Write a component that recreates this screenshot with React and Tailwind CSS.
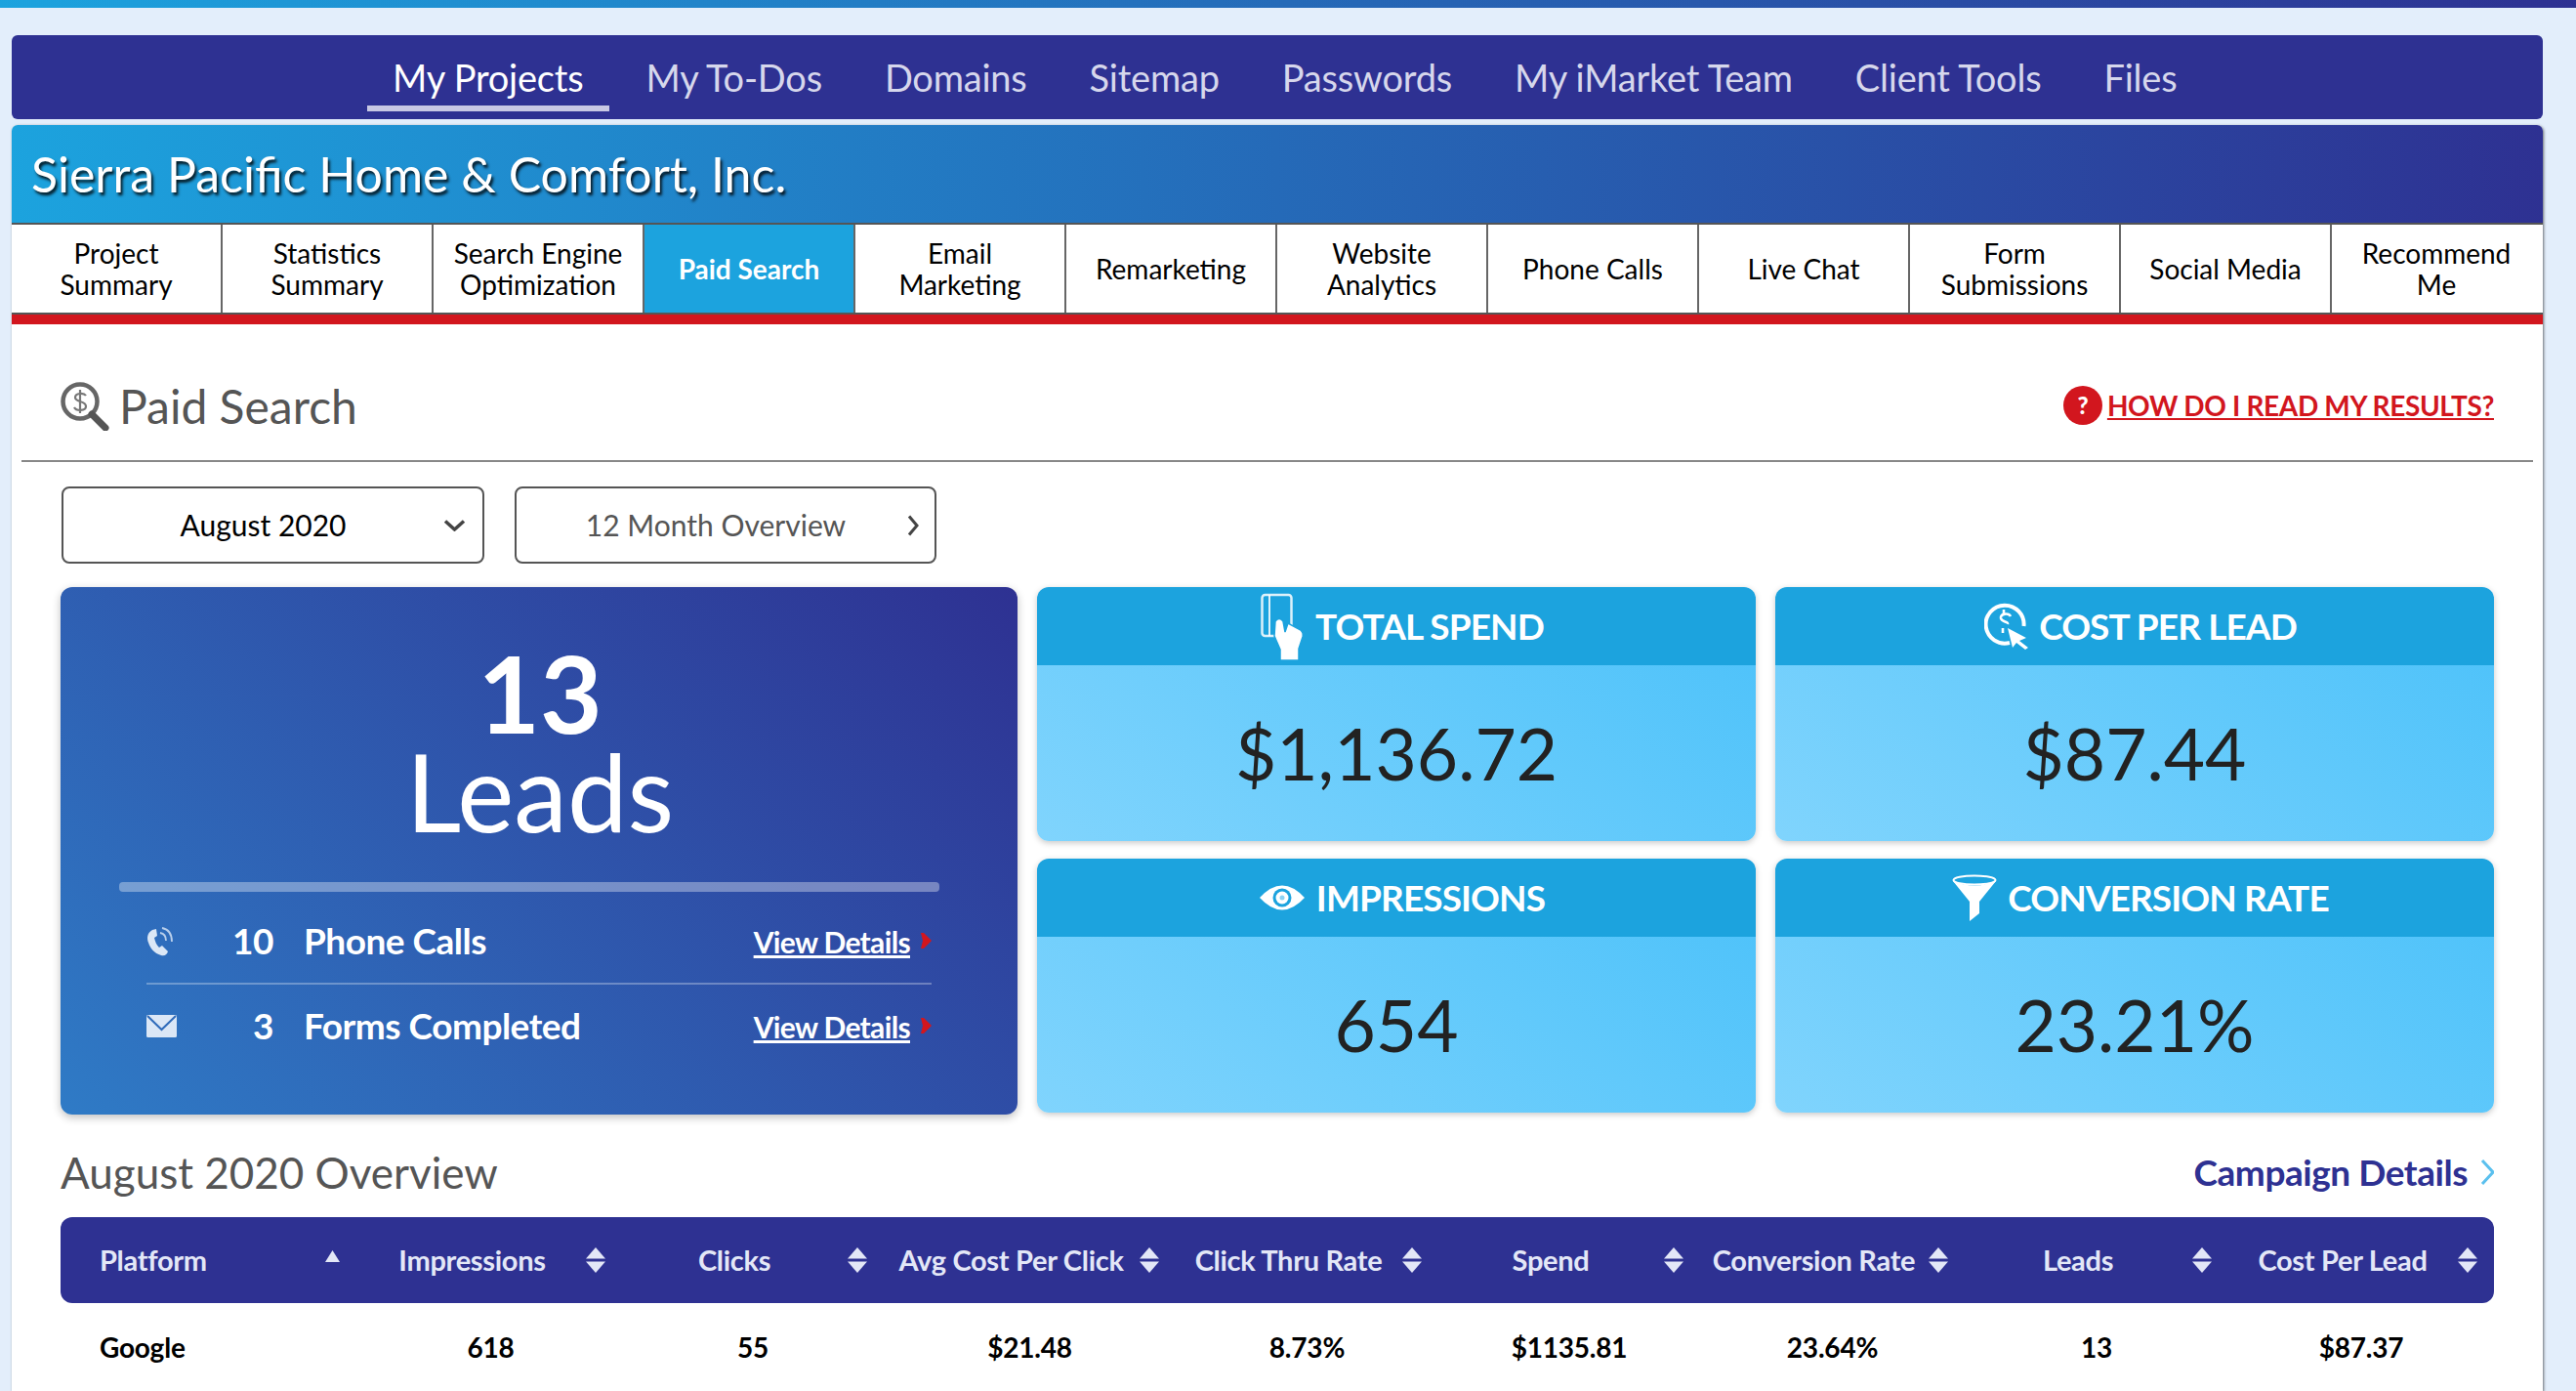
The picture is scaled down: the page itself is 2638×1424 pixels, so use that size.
const navItems = ["My Projects","My To-Dos","Domains","Sitemap","Passwords","My iMarket Team","Client Tools","Files"];
const tabs = [["Project","Summary"],["Statistics","Summary"],["Search Engine","Optimization"],["Paid Search"],["Email","Marketing"],["Remarketing"],["Website","Analytics"],["Phone Calls"],["Live Chat"],["Form","Submissions"],["Social Media"],["Recommend","Me"]];
const headers = ["Impressions","Clicks","Avg Cost Per Click","Click Thru Rate","Spend","Conversion Rate","Leads","Cost Per Lead"];
const values = ["618","55","$21.48","8.73%","$1135.81","23.64%","13","$87.37"];

function Sort() {
  return (
    <svg width="22" height="26" viewBox="0 0 22 26" className="shrink-0">
      <path d="M11 0 L21 11.5 H1 Z" fill="#e3e7f7" />
      <path d="M11 26 L21 14.5 H1 Z" fill="#e3e7f7" />
    </svg>
  );
}
function SearchIcon() {
  return (
    <svg width="50" height="50" viewBox="0 0 50 50" className="shrink-0">
      <circle cx="20" cy="20" r="17.5" fill="none" stroke="#666" strokeWidth="4.5" />
      <path d="M32 33 L46 47" stroke="#555" strokeWidth="7" strokeLinecap="round" />
      <path d="M26 14 C24 11 15 11 15 16 C15 21 26 19 26 25 C26 30 16 30 14 26 M20 8 V32" fill="none" stroke="#777" strokeWidth="2.2" />
    </svg>
  );
}
function Spend() {
  return (
    <svg width="44" height="70" viewBox="0 0 44 70" className="shrink-0">
      <rect x="1.5" y="3" width="30" height="42" rx="3" fill="none" stroke="#fff" strokeWidth="2.5" opacity="0.85" />
      <path d="M9 3 V45" stroke="#fff" strokeWidth="2" opacity="0.85" />
      <path d="M15 30 Q19 25 23 30 L25 41 L28 32 L41 39 Q44 42 43 46 L39 58 V70 H20 V59 L14 45 Z" fill="#fff" stroke="#1ca3de" strokeWidth="1.5" />
    </svg>
  );
}
function Cost() {
  return (
    <svg width="46" height="48" viewBox="0 0 46 48" className="shrink-0">
      <path d="M26 41 A19.5 19.5 0 1 1 40.5 24" fill="none" stroke="#fff" strokeWidth="4" />
      <path d="M27 14 C25 10 16 11 17 16 C18 20 25 19 24 22 M20 7 V12 M19 26 V31" fill="none" stroke="#fff" strokeWidth="2.6" />
      <path d="M24 26 L43 36 L36 39 L45 46 L42 48 L33 41 L29 46 Z" fill="#fff" />
    </svg>
  );
}
function Eye() {
  return (
    <svg width="46" height="26" viewBox="0 0 46 26" className="shrink-0">
      <path d="M0 13 Q23 -12 46 13 Q23 38 0 13 Z" fill="#fff" />
      <circle cx="23" cy="13" r="9.5" fill="#1ca3de" />
      <circle cx="23" cy="13" r="6.5" fill="#fff" />
      <circle cx="23" cy="13" r="2.5" fill="#8dd3f3" />
    </svg>
  );
}
function Funnel() {
  return (
    <svg width="46" height="48" viewBox="0 0 46 48" className="shrink-0">
      <path d="M1 7 L18 28 V48 L28 40 V28 L45 7 Q23 16 1 7 Z" fill="#fff" />
      <ellipse cx="23" cy="6" rx="21.5" ry="4.5" fill="none" stroke="#fff" strokeWidth="2" />
    </svg>
  );
}
function Phone() {
  return (
    <svg width="31" height="32" viewBox="0 0 31 32" className="shrink-0">
      <path d="M6 5 C1 8 0 13 2 18 C4 24 8 29 15 31 C19 32 21 30 22 27 L16 21 L13 23 C10 20 9 17 8 13 L11 11 L10 4 Z" fill="#dbe7f6" />
      <path d="M14 8 Q20 9 20 16 M16 3 Q26 5 26 17" fill="none" stroke="#dbe7f6" strokeWidth="1.8" opacity="0.8" />
    </svg>
  );
}
function Mail() {
  return (
    <svg width="31" height="23" viewBox="0 0 31 23" className="shrink-0">
      <rect width="31" height="23" rx="1.5" fill="#dbe7f6" />
      <path d="M1 1 L15.5 15 L30 1" fill="none" stroke="#2f6bba" strokeWidth="2" />
    </svg>
  );
}
function RedArrow() {
  return (
    <svg width="11" height="16" viewBox="0 0 11 16" className="ml-[11px] shrink-0">
      <path d="M0 0 H3 L11 8 L3 16 H0 L2 8 Z" fill="#d2161e" />
    </svg>
  );
}
function Metric({ icon, label, value, gap }) {
  return (
    <div className="flex flex-col rounded-xl overflow-hidden shadow-[0_2px_6px_rgba(0,0,0,0.22)]">
      <div className="h-[80px] pl-3 bg-[#1ca3de] flex items-center justify-center">
        {icon}
        <span className={`${gap} text-[37px] font-bold text-white tracking-[-0.9px]`}>{label}</span>
      </div>
      <div className="flex-1 pt-px flex items-center justify-center bg-[linear-gradient(35deg,#80d4fd,#50c3fa)] text-[73px] text-[#222]">{value}</div>
    </div>
  );
}
function LeadRow({ icon, num, label }) {
  return (
    <div className="h-[85px] pb-px flex items-center text-white">
      <div className="w-[31px] flex justify-center">{icon}</div>
      <span className="w-[99px] text-right text-[37px] font-bold tracking-[-0.5px]">{num}</span>
      <span className="ml-[31px] flex-1 text-[37px] font-bold tracking-[-0.5px]">{label}</span>
      <a className="text-[30px] font-bold underline tracking-[-0.65px] translate-y-px">View Details</a>
      <RedArrow />
    </div>
  );
}

export default function App() {
  return (
    <div className="h-[1424px] overflow-hidden bg-[#e3eefb] font-[Lato,sans-serif] flex flex-col">
      <div className="h-2 shrink-0 bg-[linear-gradient(to_right,#1ca3de,#2e3192)]" />
      <div className="ml-3 mr-[34px] mt-7 flex-1 flex flex-col min-h-0">
        <nav className="h-[86px] shrink-0 rounded-md bg-[#2e3192] flex pt-[14px] pl-[364px] gap-3">
          {navItems.map((n, i) => (
            <a key={n} className={`h-[64px] px-[26px] text-[38px] tracking-[-0.2px] leading-[58px] border-b-[6px] ${i === 0 ? "text-white border-[#c8c8e4]" : "text-[#d6d7ec] border-transparent"}`}>{n}</a>
          ))}
        </nav>
        <div className="mt-[6px] flex-1 flex flex-col min-h-0 bg-white rounded-t-md shadow-[1px_1px_3px_rgba(0,0,0,0.55)]">
          <div className="h-[100px] shrink-0 rounded-t-md bg-[linear-gradient(87deg,#1ca3de,#2e3192)] flex items-center pl-5">
            <h1 className="text-[50px] text-white [text-shadow:2px_3px_3px_rgba(0,0,0,0.85)]">Sierra Pacific Home &amp; Comfort, Inc.</h1>
          </div>
          <div className="grid grid-cols-12 h-[94px] shrink-0 border-y-2 border-[#555] bg-white">
            {tabs.map((t, i) => (
              <div key={i} className={`flex flex-col items-center justify-center text-[28px] leading-[32px] border-r-2 ${i < 11 ? "border-[#666]" : "border-transparent"} ${i === 3 ? "bg-[#1ca3de] text-white font-bold" : "text-black"}`}>
                {t.map(l => <span key={l}>{l}</span>)}
              </div>
            ))}
          </div>
          <div className="h-[10px] shrink-0 bg-[#d2161e]" />

          <div className="h-[141px] shrink-0 mx-[10px] border-b-2 border-[#888] flex items-center justify-between pt-[28px] pl-10 pr-[40px]">
            <div className="flex items-center gap-[10px]">
              <SearchIcon />
              <h2 className="text-[48px] text-[#555]">Paid Search</h2>
            </div>
            <a className="flex items-center gap-[5px] text-[28px] font-bold text-[#d2161e] tracking-[-0.35px] -translate-y-px">
              <span className="w-[40px] h-[40px] rounded-full bg-[#d2161e] text-white text-[24px] font-black flex items-center justify-center">?</span>
              <span className="underline">HOW DO I READ MY RESULTS?</span>
            </a>
          </div>

          <div className="mt-[25px] ml-[51px] flex gap-[31px]">
            <div className="w-[433px] h-[79px] pl-5 border-2 border-[#555] rounded-lg flex items-center text-[30px] text-black">
              <span className="flex-1 text-center">August 2020</span>
              <svg width="23" height="12" viewBox="0 0 23 12" className="mr-[17px]"><path d="M2 1.5 L11.5 10 L21 1.5" fill="none" stroke="#444" strokeWidth="3.5" /></svg>
            </div>
            <div className="w-[432px] h-[79px] pl-5 border-2 border-[#555] rounded-lg flex items-center text-[30px] text-[#555]">
              <span className="flex-1 text-center">12 Month Overview</span>
              <svg width="12" height="22" viewBox="0 0 12 22" className="mr-[16px] ml-[12px]"><path d="M2 1.5 L10 11 L2 20.5" fill="none" stroke="#444" strokeWidth="3" /></svg>
            </div>
          </div>

          <div className="mt-6 ml-[50px] mr-[50px] grid grid-cols-[980px_1fr_1fr] grid-rows-[260px_260px] gap-x-5 gap-y-[18px]">
            <div className="row-span-2 -mb-[2px] rounded-xl shadow-[0_3px_8px_rgba(0,0,0,0.25)] bg-[linear-gradient(42deg,#2f7bc6,#2e3192)] flex flex-col">
              <div className="pt-[57px] pl-[2px] h-[265px] text-center text-white text-[110px] leading-[101px]">
                <div className="font-bold">13</div>
                <div>Leads</div>
              </div>
              <div className="mt-[37px] ml-[60px] mr-[80px] h-[10px] rounded bg-white/35" />
              <div className="mt-2 mx-[88px]">
                <LeadRow icon={<Phone />} num="10" label="Phone Calls" />
                <div className="h-[2px] bg-white/30" />
                <LeadRow icon={<Mail />} num="3" label="Forms Completed" />
              </div>
            </div>
            <Metric icon={<Spend />} gap="ml-3" label="TOTAL SPEND" value="$1,136.72" />
            <Metric icon={<Cost />} gap="ml-[10px]" label="COST PER LEAD" value="$87.44" />
            <Metric icon={<Eye />} gap="ml-3" label="IMPRESSIONS" value="654" />
            <Metric icon={<Funnel />} gap="ml-[11px]" label="CONVERSION RATE" value="23.21%" />
          </div>

          <div className="mt-[30px] ml-[50px] mr-[50px]">
            <div className="flex items-center justify-between h-[62px] mb-[15px]">
              <h3 className="text-[44px] text-[#555]">August 2020 Overview</h3>
              <a className="flex items-center gap-[12px] text-[37px] font-bold text-[#2e3192] tracking-[-0.45px]">
                Campaign Details
                <svg width="15" height="28" viewBox="0 0 15 28"><path d="M3 2 L14 14 L3 26" fill="none" stroke="#5bc0ee" strokeWidth="3" /></svg>
              </a>
            </div>
            <div className="grid grid-cols-[306px_269px_268px_299px_269px_268px_271px_270px_272px] h-[88px] rounded-xl bg-[#2e3192] text-[29px] font-bold text-[#e3e7f7] tracking-[-0.3px]">
              <div className="flex items-center pl-10 pr-5">
                <span className="flex-1">Platform</span>
                <svg width="15" height="12" viewBox="0 0 15 12" className="mb-[8px]"><path d="M7.5 0 L15 12 H0 Z" fill="#e3e7f7" /></svg>
              </div>
              {headers.map(h => (
                <div key={h} className="flex items-center pr-4">
                  <span className="flex-1 text-center whitespace-nowrap">{h}</span>
                  <Sort />
                </div>
              ))}
            </div>
            <div className="grid grid-cols-[306px_269px_268px_299px_269px_268px_271px_270px_272px] h-[90px] items-center text-[28px] font-bold text-black tracking-[-0.2px]">
              <div className="pl-10">Google</div>
              {values.map(v => <div key={v} className="text-center">{v}</div>)}
            </div>
          </div>
        </div>
      </div>
    </div>
  );
}
